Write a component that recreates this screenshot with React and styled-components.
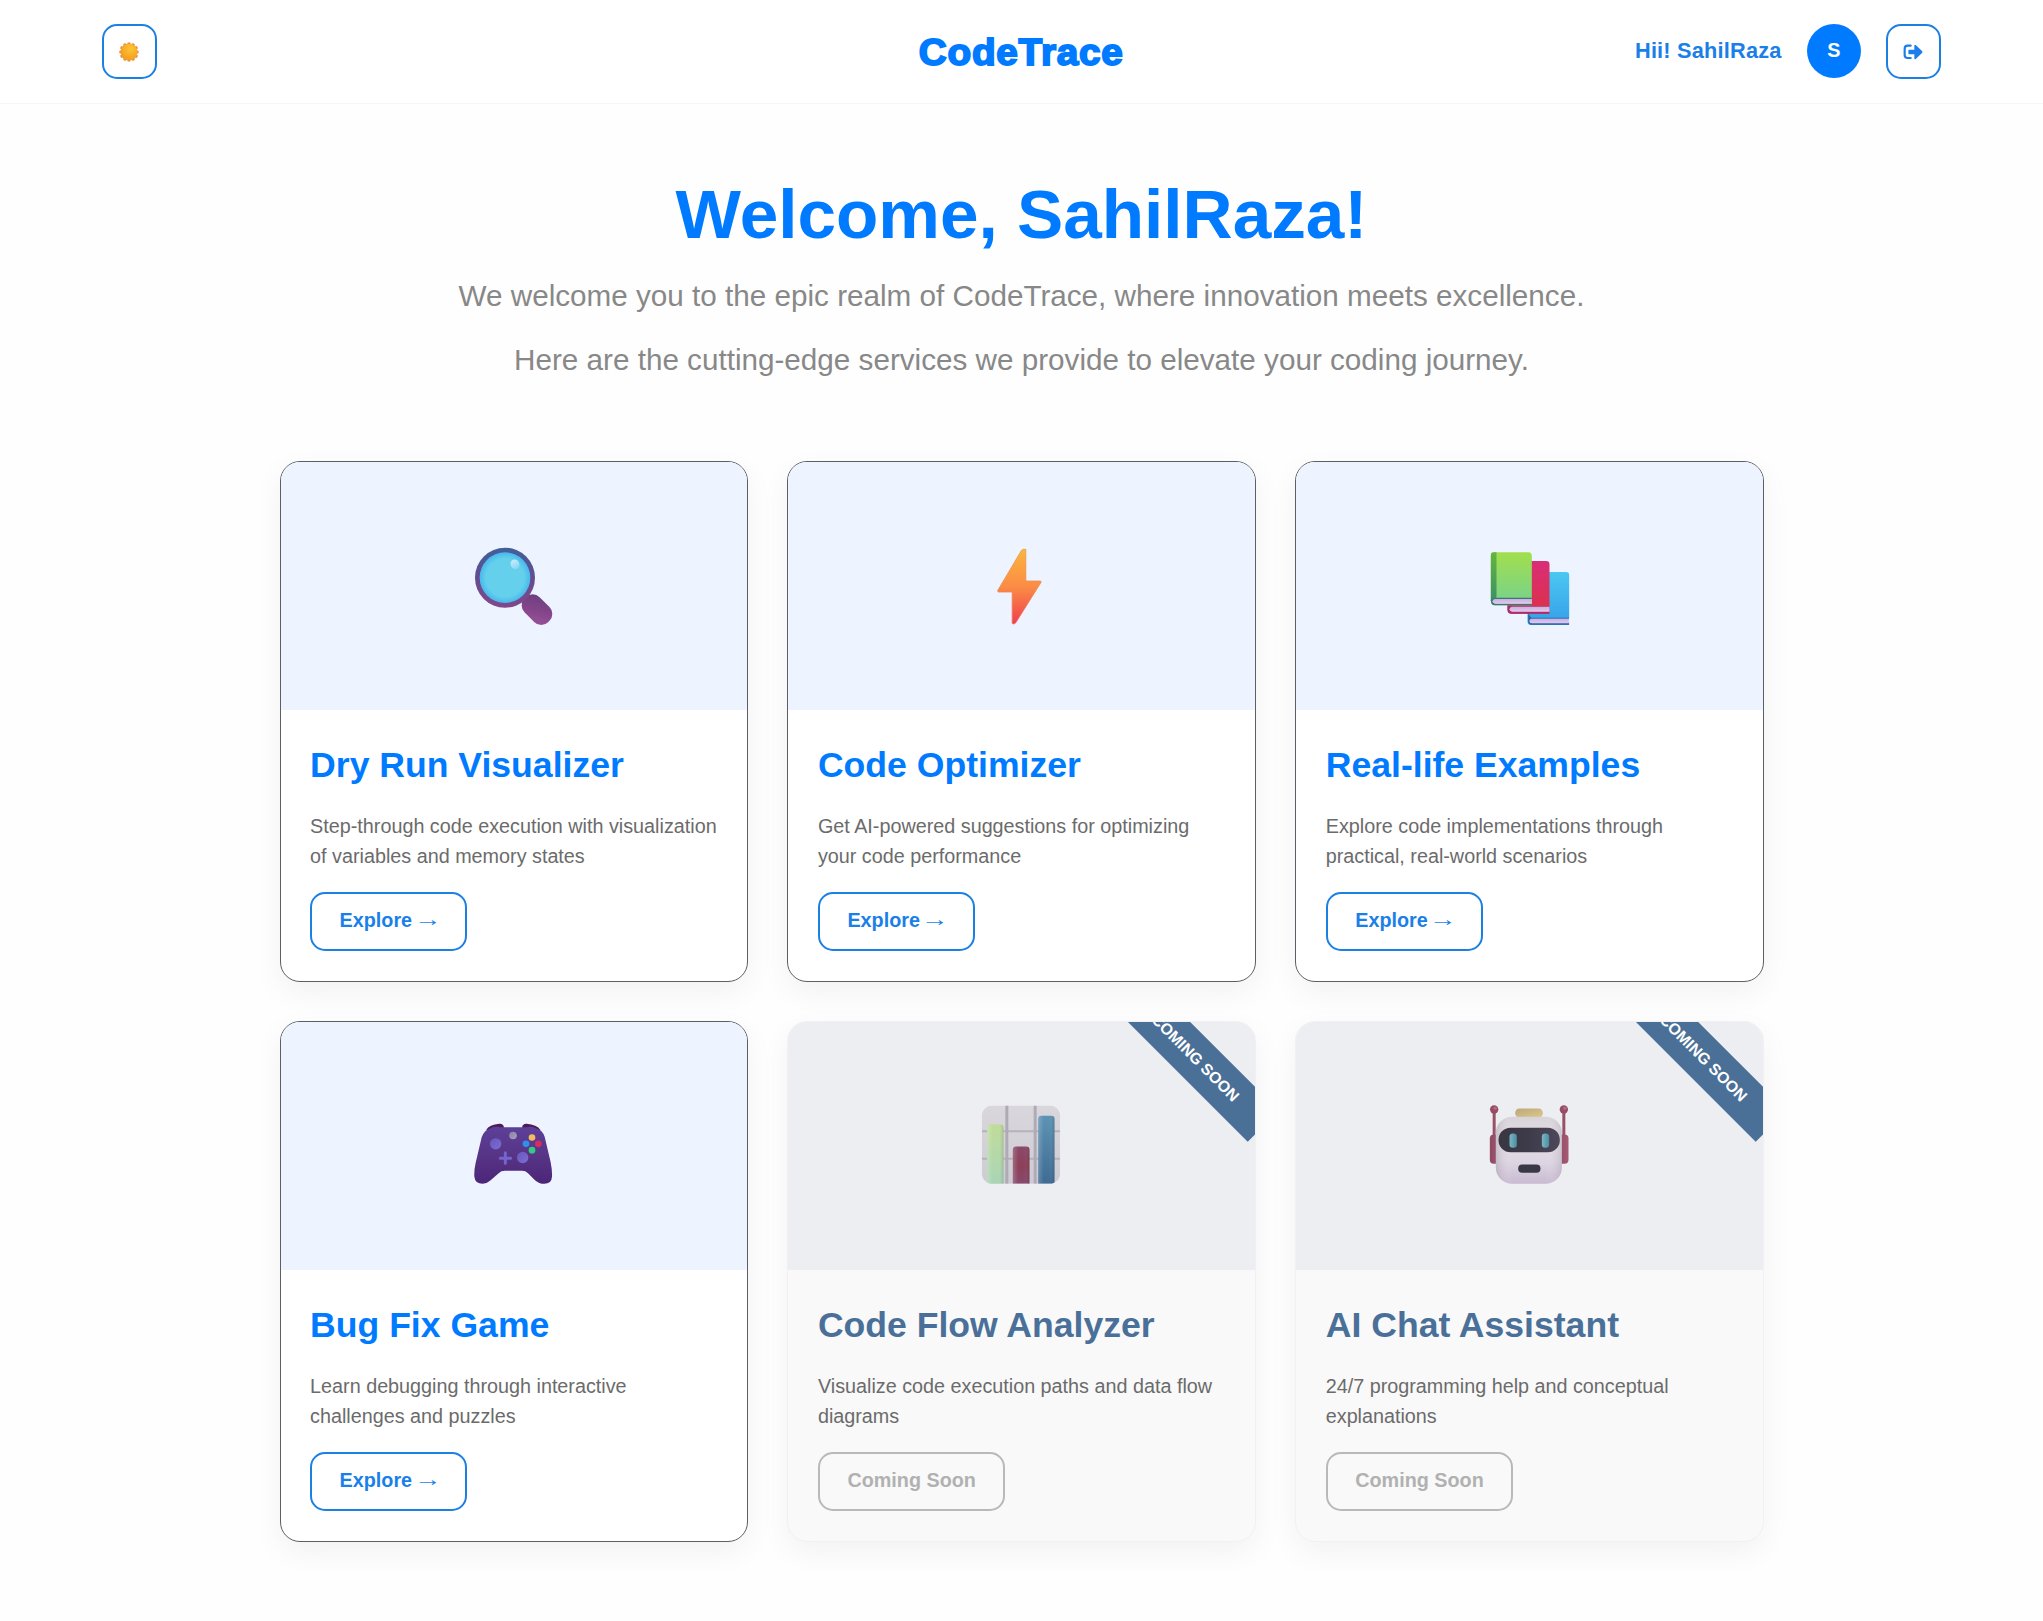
import React from "react";
import styled, { createGlobalStyle, css } from "styled-components";

const GlobalStyle = createGlobalStyle`
  * { box-sizing: border-box; }
  body {
    margin: 0;
    background: #fefefe;
    font-family: Arial, "Liberation Sans", sans-serif;
    font-size: 19.77px;
    line-height: 1.5;
    color: #007bff;
  }
  h1, h2, p { margin: 0; }
`;

const Header = styled.header`
  display: grid;
  grid-template-columns: 1fr auto 1fr;
  align-items: center;
  height: 103.5px;
  padding: 0 102px 0 101.5px;
  background: #fff;
  border-bottom: 1.4px solid #f3f5f8;
`;

const IconButton = styled.button`
  display: flex;
  align-items: center;
  justify-content: center;
  width: 55px;
  height: 55px;
  padding: 1px 1px 0 0;
  color: #1a7fe8;
  background: #fff;
  border: 2px solid #1c80e3;
  border-radius: 15px;
`;

const Logo = styled.div`
  padding-top: 3px;
  font-size: 36px;
  font-weight: 900;
  line-height: 1.5;
  letter-spacing: 0.7px;
  color: #007bff;
  -webkit-text-stroke: 1.8px #007bff;
  transform: scaleX(1.075);
`;

const Account = styled.div`
  display: flex;
  align-items: center;
  justify-content: flex-end;
  gap: 25px;
`;

const Greeting = styled.span`
  padding-top: 1px;
  font-size: 21.75px;
  font-weight: 700;
  letter-spacing: 0.2px;
  color: #1a7fe8;
`;

const Avatar = styled.span`
  display: flex;
  align-items: center;
  justify-content: center;
  width: 54.4px;
  height: 54.4px;
  border-radius: 50%;
  background: #007bff;
  color: #fff;
  font-weight: 700;
`;

const Hero = styled.section`
  padding-top: 69px;
  text-align: center;
`;

const Heading = styled.h1`
  margin-bottom: 18.2px;
  font-size: 69.3px;
  line-height: 83px;
  color: #007bff;
`;

const Lead = styled.p`
  margin-bottom: 19.8px;
  font-size: 29.66px;
  color: #888;
`;

const Grid = styled.main`
  display: grid;
  grid-template-columns: repeat(3, 1fr);
  gap: 39.5px;
  width: 1484px;
  margin: 78.7px auto 0;
  padding-bottom: 77px;
`;

const Card = styled.article`
  position: relative;
  height: 520.5px;
  overflow: hidden;
  border: 1px solid #5c6066;
  border-radius: 20px;
  background: #fff;
  box-shadow: 0 10px 30px rgba(0, 0, 0, 0.05);
  ${(p) => p.$soon && css`
    border-color: #f1f1f3;
    background: #f9f9f9;
  `}
`;

const CardMedia = styled.div`
  display: flex;
  align-items: center;
  justify-content: center;
  height: 247.5px;
  background: ${(p) => (p.$soon ? "#edeef2" : "#edf4ff")};
`;

const CardBody = styled.div`
  padding: 29.6px;
`;

const CardTitle = styled.h2`
  margin-bottom: 19.8px;
  font-size: 35.6px;
  line-height: 1.5;
  color: ${(p) => (p.$soon ? "#4a7099" : "#007bff")};
`;

const CardText = styled.p`
  margin-bottom: 19.8px;
  color: #6b6b6b;
`;

const CardButton = styled.button`
  height: 59.3px;
  padding: 0 27.5px;
  font: inherit;
  font-weight: 700;
  color: ${(p) => (p.$soon ? "#b1b1b1" : "#1a7fe8")};
  background: ${(p) => (p.$soon ? "#f9f9f9" : "#fff")};
  border: 2px solid ${(p) => (p.$soon ? "#b9b9b9" : "#1c80e3")};
  border-radius: 15px;
`;

const Arrow = styled.span`
  display: inline-block;
  font-family: "Liberation Serif", serif;
  font-weight: 400;
  line-height: 1;
  transform: translateY(-1px) scaleX(1.4);
`;

const Ribbon = styled.span`
  position: absolute;
  top: 14.8px;
  right: -36px;
  width: 190px;
  height: 44.3px;
  padding-right: 3px;
  line-height: 44.3px;
  text-align: center;
  font-size: 15.82px;
  font-weight: 700;
  color: #fff;
  background: #4b7098;
  transform: rotate(45deg);
  white-space: nowrap;
`;

const Art = styled.svg`
  display: block;
  width: 80px;
  height: 80px;
  overflow: visible;
`;

const Grad = ({ id, stops, x2 = 0, y2 = 1 }) => (
  <linearGradient id={id} x1="0" y1="0" x2={x2} y2={y2}>
    {stops.map((c, i) => (
      <stop key={i} offset={i / (stops.length - 1)} stopColor={c} />
    ))}
  </linearGradient>
);

const SunIcon = () => (
  <svg width="20" height="20" viewBox="-30 -30 60 60">
    <defs>
      <radialGradient id="sun" cx=".6" cy=".3" r=".8">
        <stop offset="0" stopColor="#ffc533" />
        <stop offset="1" stopColor="#f0981f" />
      </radialGradient>
    </defs>
    {Array.from({ length: 12 }, (_, i) => (
      <circle key={i} cx="0" cy="-24" r="5.5" fill="#e8933f" transform={`rotate(${i * 30})`} />
    ))}
    <circle r="25" fill="url(#sun)" />
  </svg>
);

const LogoutIcon = () => (
  <svg width="20" height="16" viewBox="0 0 60 48">
    <path d="M23 5H14Q5 5 5 14V33Q5 42 14 42H23" fill="none" stroke="currentColor" strokeWidth="6.5" strokeLinecap="round" />
    <path d="M19 17H34V6Q34 0 39 4L57 21Q60 24 57 27L39 44Q34 48 34 42V31H19Q16 31 16 28V20Q16 17 19 17Z" fill="currentColor" />
  </svg>
);

const MagnifierArt = () => (
  <Art viewBox="72 48 240 240">
    <defs>
      <Grad id="rim" stops={["#40609b", "#634c8e", "#81488a"]} />
      <Grad id="handle" x2={1} stops={["#67407c", "#834489", "#9b559b"]} />
      <radialGradient id="lens" cx=".5" cy=".5" r=".5">
        <stop offset=".75" stopColor="#65d0ec" />
        <stop offset="1" stopColor="#48b8ed" />
      </radialGradient>
      <Grad id="shine" y2={1} stops={["#c8eafd", "#83d8f3"]} />
    </defs>
    <rect x="-50" y="-32" width="100" height="64" rx="29" fill="url(#handle)" transform="translate(261 239) rotate(45)" />
    <circle cx="165" cy="143" r="90" fill="url(#rim)" />
    <circle cx="165" cy="143" r="76" fill="url(#lens)" />
    <ellipse cx="195" cy="103" rx="13" ry="15" fill="url(#shine)" transform="rotate(-25 195 103)" />
  </Art>
);

const BoltArt = () => (
  <Art viewBox="34.5 48 240 240">
    <defs>
      <Grad id="bolt" stops={["#fbb53d", "#fb8c45", "#ef3f4d"]} />
      <Grad id="boltEdge" stops={["#e3a247", "#f08a4b", "#f46a6b"]} />
    </defs>
    <path d="M162 58H169V153H213Q216 154 214 158L139 278Q136 282 131 282Q128 282 128 278V186H87Q82 185 86 179L156 61Q158 58 162 58Z" fill="url(#bolt)" stroke="url(#boltEdge)" strokeWidth="2.5" />
  </Art>
);

const BooksArt = () => (
  <Art viewBox="58.5 48 240 240">
    <defs>
      <Grad id="green" stops={["#a2df4d", "#75d18e"]} />
      <Grad id="greenSpine" stops={["#64b63d", "#3c9065"]} />
      <Grad id="red" stops={["#d92e77", "#dc3148"]} />
      <Grad id="blue" stops={["#4cc7f2", "#359fe9"]} />
      <Grad id="pages" stops={["#c9afe0", "#dfcaf0"]} />
    </defs>
    <path d="M187 126H290Q299 126 299 135V264L294 273L299 278V285H184Q174 285 174 273V139Q174 126 187 126Z" fill="url(#blue)" />
    <path d="M176 250V273Q176 284 187 284H298V279H185Q180 279 180 273Q180 267 185 266H298V263H185Z" fill="#2b659f" />
    <path d="M187 266H298V280H187Q180 280 180 273Q180 266 187 266Z" fill="url(#pages)" />
    <path d="M127 93H230Q240 93 240 103V251H126Q114 251 114 239V106Q114 93 127 93Z" fill="url(#red)" />
    <path d="M114 226V239Q114 251 126 251H239V246H127Q121 246 121 239Q121 232 127 230H239V228H127Z" fill="#a72f70" />
    <path d="M128 230H240V245H128Q120 244 120 238Q120 231 128 230Z" fill="url(#pages)" />
    <path d="M73 67H177Q187 67 187 78V226H76Q64 226 64 213V77Q64 67 73 67Z" fill="url(#green)" />
    <path d="M73 67H81V202L68 214L64 213V77Q64 67 73 67Z" fill="url(#greenSpine)" />
    <path d="M64 211Q64 226 76 226H187V221H77Q70 220 70 214Q70 208 77 207H187V203H79Q68 203 64 211Z" fill="#3e7675" />
    <path d="M77 207H187V221H77Q69 220 69 214Q69 208 77 207Z" fill="url(#pages)" />
  </Art>
);

const GamepadArt = () => (
  <Art viewBox="72 19.5 240 240">
    <defs>
      <Grad id="pad" stops={["#5c4099", "#573486", "#4d2578"]} />
      <Grad id="stick" x2={1} stops={["#6857bd", "#7d6ed3"]} />
      <Grad id="grayDot" x2={1} stops={["#8780a0", "#aaa3bc"]} />
    </defs>
    <path d="M108 92Q118 75 148 73Q160 72 162 84L150 94ZM216 84Q218 72 230 73Q260 75 272 92L230 94Z" fill="#4d1d56" />
    <path d="M122 86Q134 80 150 83H230Q246 80 257 86Q277 90 284 112L302 188Q307 213 306 231Q305 253 283 253Q267 253 255 242L234 221Q227 214 216 214H165Q153 214 146 221L121 243Q110 253 98 253Q75 253 73 231Q72 212 77 190L95 113Q103 91 122 86Z" fill="url(#pad)" />
    <circle cx="137" cy="133" r="17" fill="url(#stick)" />
    <circle cx="218" cy="174" r="17" fill="url(#stick)" />
    <path d="M166 160V191M151 176H182" stroke="#7564cd" strokeWidth="9" strokeLinecap="round" />
    <circle cx="189" cy="108" r="11.5" fill="url(#grayDot)" />
    <circle cx="246" cy="114" r="10" fill="#f6bb61" />
    <circle cx="265" cy="133" r="10" fill="#dc2b5b" />
    <circle cx="228" cy="133" r="10" fill="#2e91ea" />
    <circle cx="246" cy="152" r="10" fill="#35ca83" />
  </Art>
);

const ChartArt = () => (
  <Art viewBox="64.5 49.5 240 240">
    <defs>
      <clipPath id="tile"><rect x="67" y="48" width="235" height="235" rx="32" /></clipPath>
      <Grad id="tileFill" stops={["#d9d7dc", "#cecbd4"]} />
      <Grad id="barGreen" stops={["#c1dc9b", "#a9d5b5"]} />
      <Grad id="barRed" stops={["#8b4a6b", "#8d4058", "#86496d"]} />
      <Grad id="barBlue" stops={["#5e93b4", "#3f6b94"]} />
      <Grad id="barShade" x2={1} y2={0} stops={["#ffffff33", "#ffffff00", "#ffffff00", "#00000022"]} />
    </defs>
    <g clipPath="url(#tile)">
      <rect x="67" y="48" width="235" height="235" fill="url(#tileFill)" />
      <path d="M67 125H302M67 208H302" stroke="#b5b2bb" strokeWidth="6" />
      <path d="M142 48V283M227 48V283" stroke="#aeabb5" strokeWidth="9" />
      <path d="M83 283V114Q83 104 93 104H122Q132 104 132 114V283Z" fill="url(#barGreen)" />
      <path d="M83 283V114Q83 104 93 104H122Q132 104 132 114V283Z" fill="url(#barShade)" />
      <path d="M160 283V181Q160 171 170 171H200Q210 171 210 181V283Z" fill="url(#barRed)" />
      <path d="M160 283V181Q160 171 170 171H200Q210 171 210 181V283Z" fill="url(#barShade)" />
      <path d="M236 283V89Q236 79 246 79H275Q285 79 285 89V283Z" fill="url(#barBlue)" />
      <path d="M236 283V89Q236 79 246 79H275Q285 79 285 89V283Z" fill="url(#barShade)" />
    </g>
  </Art>
);

const RobotArt = () => (
  <Art viewBox="58.5 49.5 240 240">
    <defs>
      <Grad id="head" stops={["#d8d4da", "#e3dde4", "#ddd6e2", "#c9bad2"]} />
      <Grad id="headSide" x2={1} y2={0} stops={["#8d809050", "#ffffff00", "#ffffff00", "#ffffff00", "#8d809040"]} />
      <Grad id="visor" x2={1} y2={0} stops={["#393741", "#3e3b4a", "#4c485b"]} />
      <Grad id="ear" x2={1} y2={0} stops={["#8e4b62", "#a75973"]} />
      <Grad id="cap" x2={1} stops={["#bda77b", "#dcc88a"]} />
      <Grad id="eye" x2={1} y2={0} stops={["#76b7c5", "#518da0"]} />
    </defs>
    <path d="M74 62V145M283 62V145" stroke="#995168" strokeWidth="9" />
    <circle cx="74" cy="60" r="12.5" fill="#964d64" />
    <circle cx="283" cy="60" r="12.5" fill="#964d64" />
    <circle cx="77" cy="56" r="5" fill="#b26c82" />
    <circle cx="286" cy="56" r="5" fill="#b26c82" />
    <rect x="61" y="135" width="38" height="88" rx="12" fill="url(#ear)" />
    <rect x="259" y="135" width="38" height="88" rx="12" fill="url(#ear)" />
    <rect x="137" y="57" width="83" height="27" rx="13" fill="url(#cap)" />
    <rect x="79" y="82" width="198" height="201" rx="49" fill="url(#head)" />
    <rect x="79" y="82" width="198" height="201" rx="49" fill="url(#headSide)" />
    <rect x="87" y="115" width="184" height="73" rx="36" fill="url(#visor)" />
    <rect x="120" y="132" width="22" height="43" rx="10" fill="url(#eye)" />
    <rect x="217" y="132" width="22" height="43" rx="10" fill="url(#eye)" />
    <rect x="146" y="225" width="67" height="25" rx="12" fill="#3b3845" />
  </Art>
);

const services = [
  { title: "Dry Run Visualizer", text: "Step-through code execution with visualization of variables and memory states", art: MagnifierArt },
  { title: "Code Optimizer", text: "Get AI-powered suggestions for optimizing your code performance", art: BoltArt },
  { title: "Real-life Examples", text: "Explore code implementations through practical, real-world scenarios", art: BooksArt },
  { title: "Bug Fix Game", text: "Learn debugging through interactive challenges and puzzles", art: GamepadArt },
  { title: "Code Flow Analyzer", text: "Visualize code execution paths and data flow diagrams", art: ChartArt, soon: true },
  { title: "AI Chat Assistant", text: "24/7 programming help and conceptual explanations", art: RobotArt, soon: true },
];

const ServiceCard = ({ title, text, art: Picture, soon }) => (
  <Card $soon={soon}>
    <CardMedia $soon={soon}>
      <Picture />
    </CardMedia>
    {soon && <Ribbon>COMING SOON</Ribbon>}
    <CardBody>
      <CardTitle $soon={soon}>{title}</CardTitle>
      <CardText>{text}</CardText>
      <CardButton $soon={soon} disabled={soon}>
        {soon ? "Coming Soon" : <>Explore <Arrow>→</Arrow></>}
      </CardButton>
    </CardBody>
  </Card>
);

export default function App() {
  return (
    <>
      <GlobalStyle />
      <Header>
        <IconButton aria-label="Toggle theme">
          <SunIcon />
        </IconButton>
        <Logo>CodeTrace</Logo>
        <Account>
          <Greeting>Hii! SahilRaza</Greeting>
          <Avatar>S</Avatar>
          <IconButton aria-label="Log out">
            <LogoutIcon />
          </IconButton>
        </Account>
      </Header>
      <Hero>
        <Heading>Welcome, SahilRaza!</Heading>
        <Lead>We welcome you to the epic realm of CodeTrace, where innovation meets excellence.</Lead>
        <Lead>Here are the cutting-edge services we provide to elevate your coding journey.</Lead>
      </Hero>
      <Grid>
        {services.map((s) => (
          <ServiceCard key={s.title} {...s} />
        ))}
      </Grid>
    </>
  );
}
